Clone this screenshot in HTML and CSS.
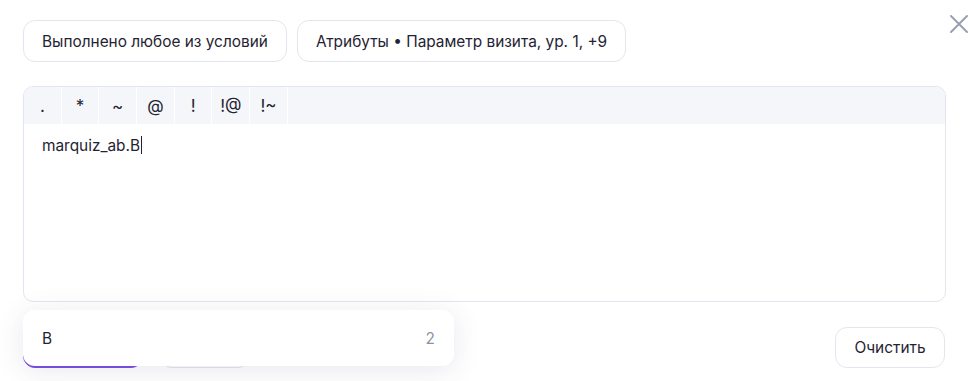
FILE: index.html
```html
<!DOCTYPE html>
<html lang="ru">
<head>
    <meta charset="UTF-8">
    <meta name="viewport" content="width=device-width, initial-scale=1.0">
    <title>Условие сегмента</title>
    <link rel="stylesheet" href="styles.css">
</head>
<body>
    <div class="panel">
        <div class="chips">
            <button class="chip">Выполнено любое из условий</button>
            <button class="chip">Атрибуты • Параметр визита, ур. 1, +9</button>
        </div>

        <button class="close" aria-label="Закрыть">
            <svg width="20" height="20" viewBox="0 0 20 20">
                <path d="M2 2 L18 18 M18 2 L2 18" stroke="#9aa0ae" stroke-width="2" stroke-linecap="round"/>
            </svg>
        </button>

        <div class="editor">
            <div class="toolbar">
                <span class="op">.</span>
                <span class="op">*</span>
                <span class="op">~</span>
                <span class="op">@</span>
                <span class="op">!</span>
                <span class="op">!@</span>
                <span class="op">!~</span>
            </div>
            <div class="editor-body">
                <span class="value">marquiz_ab.B</span><span class="caret"></span>
            </div>
        </div>

        <div class="actions">
            <!-- кнопки перекрыты подсказкой, подписи не видны -->
            <button class="btn btn-primary" aria-label="Применить"></button>
            <button class="btn btn-cancel" aria-label="Отмена"></button>
            <div class="spacer"></div>
            <button class="btn btn-clear">Очистить</button>
        </div>

        <div class="suggest">
            <span class="suggest-text">B</span>
            <span class="suggest-count">2</span>
        </div>
    </div>
</body>
</html>
```

FILE: styles.css
```css
:root {
    --text: #1f2332;
    --muted: #8d92a2;
    --border: #e3e6ee;
    --toolbar: #f5f6fa;
    --purple: #7b4fe2;
    --radius: 12px;
}

* {
    box-sizing: border-box;
}

body {
    margin: 0;
    font-family: 'Inter', 'Noto Sans', sans-serif;
    color: var(--text);
    background: #ffffff;
}

button {
    font-family: inherit;
    color: inherit;
}

.panel {
    position: relative;
    padding: 20px 28px 0 23px;
    height: 381px;
}

.chips {
    display: flex;
    gap: 10px;
}

.chip {
    height: 42px;
    padding: 0 18px;
    font-size: 15.4px;
    background: #ffffff;
    border: 1px solid var(--border);
    border-radius: var(--radius);
}

.close {
    position: absolute;
    top: 14px;
    right: 5px;
    padding: 0;
    border: none;
    background: none;
    width: 20px;
    height: 20px;
}

.editor {
    margin-top: 24px;
    height: 216px;
    border: 1px solid var(--border);
    border-radius: 10px;
    overflow: hidden;
}

.toolbar {
    display: flex;
    height: 37px;
    background: var(--toolbar);
}

.op {
    width: 37.7px;
    display: flex;
    align-items: center;
    justify-content: center;
    font-size: 17px;
    border-right: 1px solid #ffffff;
}

.editor-body {
    padding: 12px 18px;
    font-size: 15.4px;
    line-height: 20px;
}

.caret {
    display: inline-block;
    width: 1px;
    height: 18px;
    margin-left: 1px;
    vertical-align: -3px;
    background: var(--text);
}

.actions {
    display: flex;
    gap: 17px;
    margin-top: 25px;
}

.spacer {
    flex: 1;
}

.btn {
    height: 41px;
    padding: 0 18px;
    font-size: 15.4px;
    background: #ffffff;
    border: 1px solid var(--border);
    border-radius: var(--radius);
}

.btn-primary {
    width: 120px;
    background: var(--purple);
    border-color: var(--purple);
}

.btn-cancel {
    width: 90px;
}

.btn-clear {
    width: 110px;
    margin-right: 1px;
}

.suggest {
    position: absolute;
    left: 23px;
    top: 310px;
    width: 431px;
    height: 56px;
    display: flex;
    align-items: center;
    justify-content: space-between;
    padding: 0 19px;
    background: #ffffff;
    border-radius: var(--radius);
    box-shadow: 0 4px 28px rgba(60, 64, 110, 0.12);
    font-size: 15.4px;
}

.suggest-count {
    color: var(--muted);
}
```
